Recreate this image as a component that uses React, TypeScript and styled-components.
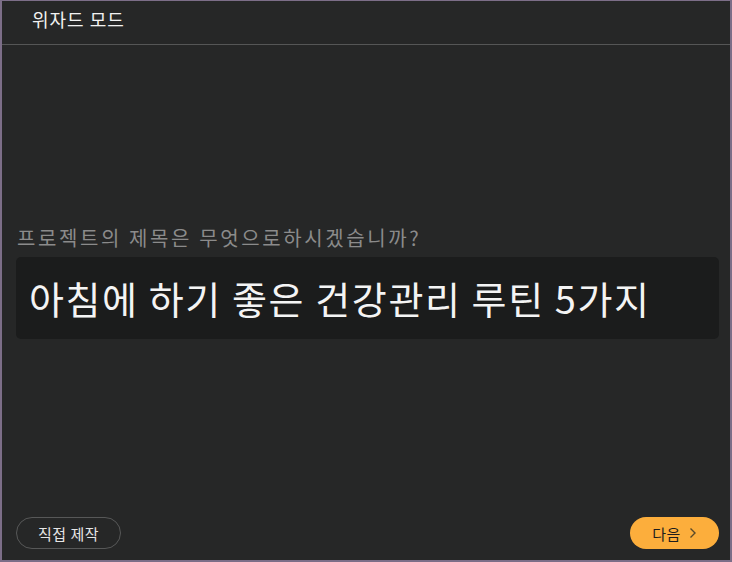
import React from "react";
import styled, { createGlobalStyle } from "styled-components";

const Global = createGlobalStyle`
  html, body { margin: 0; padding: 0; background: #7c6e88; }
  body { font-family: "Noto Sans CJK KR", "Noto Sans", sans-serif; }
  * { box-sizing: border-box; }
`;

const Frame = styled.div`
  width: 732px;
  height: 562px;
  border: 2px solid #7c6e88;
  border-top-width: 1px;
  background: #262727;
  display: flex;
  flex-direction: column;
`;

const Header = styled.header`
  height: 44px;
  border-bottom: 1px solid #555656;
  padding: 5px 0 0 30px;
  color: #f2f2f2;
  font-size: 18px;
  line-height: 26px;
  letter-spacing: 1px;
`;

const Main = styled.main`
  flex: 1;
  display: flex;
  flex-direction: column;
  padding: 179px 11px 0 14px;
`;

const Question = styled.div`
  color: #8b8b8b;
  font-size: 20px;
  line-height: 27px;
  letter-spacing: 2.6px;
  padding-left: 1px;
  margin-bottom: 6px;
`;

const TitleBox = styled.div`
  height: 82px;
  background: #1b1c1c;
  border-radius: 5px;
  display: flex;
  align-items: center;
  padding: 0 0 2px 13px;
  color: #f4f4f4;
  font-size: 38px;
  letter-spacing: 1.6px;
`;

const Footer = styled.footer`
  display: flex;
  justify-content: space-between;
  align-items: center;
  padding: 0 11px 11px 14px;
`;

const PillButton = styled.button<{ $primary?: boolean }>`
  height: 32px;
  border-radius: 16px;
  font-family: inherit;
  font-size: 15px;
  letter-spacing: 0.5px;
  display: flex;
  align-items: center;
  justify-content: center;
  gap: 8px;
  cursor: pointer;
  padding: 0;
  width: ${(p) => (p.$primary ? "89px" : "105px")};
  background: ${(p) => (p.$primary ? "#fcae3c" : "transparent")};
  color: ${(p) => (p.$primary ? "#1d1d1d" : "#e6e6e6")};
  border: ${(p) => (p.$primary ? "none" : "1px solid #575858")};
`;

const Chevron = () => (
  <svg width="8" height="12" viewBox="0 0 8 12" fill="none">
    <path d="M1.5 1.5 L6 6 L1.5 10.5" stroke="#5a4a2a" strokeWidth="1.4" />
  </svg>
);

export default function App() {
  return (
    <>
      <Global />
      <Frame>
        <Header>위자드 모드</Header>
        <Main>
          <Question>프로젝트의 제목은 무엇으로하시겠습니까?</Question>
          <TitleBox>아침에 하기 좋은 건강관리 루틴 5가지</TitleBox>
        </Main>
        <Footer>
          <PillButton>직접 제작</PillButton>
          <PillButton $primary>
            다음 <Chevron />
          </PillButton>
        </Footer>
      </Frame>
    </>
  );
}
